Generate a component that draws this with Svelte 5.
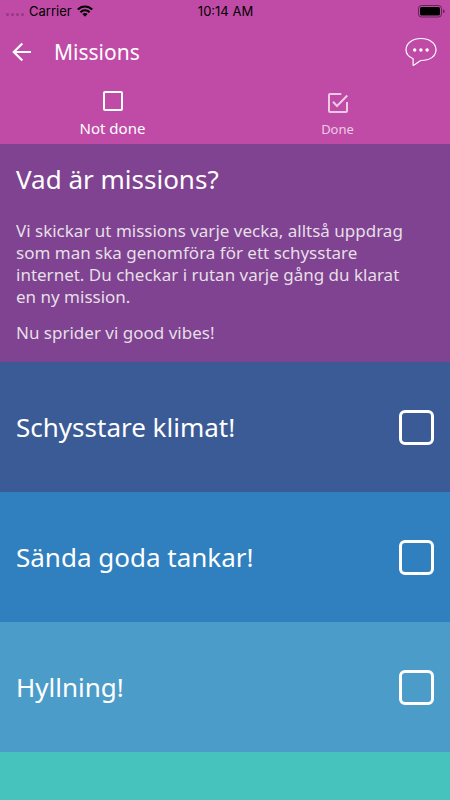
<script>
  let missions = $state([
    { id: 'klimat', title: 'Schysstare klimat!', color: '#3b5b97', done: false },
    { id: 'tankar', title: 'Sända goda tankar!', color: '#307fbe', done: false },
    { id: 'hyllning', title: 'Hyllning!', color: '#4c9cc9', done: false }
  ]);
  let tab = $state('open');
</script>

<div class="screen">
  <header>
    <div class="status">
      <div class="carrier">
        <span class="signal"><i></i><i></i><i></i><i></i></span>
        <span>Carrier</span>
        <svg width="16" height="12" viewBox="0 0 16 12" fill="none" stroke="#000" stroke-width="2.1" aria-hidden="true">
          <path d="M.8 4.5C4.9.4 11.1.4 15.2 4.5" />
          <path d="M3.4 7.2C6 4.6 10 4.6 12.6 7.2" />
          <path d="M8 11.8 5.4 9.1Q8 7 10.6 9.1Z" fill="#000" stroke="none" />
        </svg>
      </div>
      <span>10:14 AM</span>
      <div class="battery">
        <svg width="27" height="13" viewBox="0 0 27 13" aria-hidden="true">
          <rect x=".5" y=".5" width="23" height="11.5" rx="3" fill="none" stroke="#000" stroke-opacity=".5" />
          <rect x="2" y="2" width="20" height="8.5" rx="1.5" />
          <path d="M25 4.3q1.6.5 1.6 2t-1.6 2z" fill-opacity=".5" />
        </svg>
      </div>
    </div>

    <div class="bar">
      <button class="icon" aria-label="Back">
        <svg width="20" height="20" viewBox="0 0 20 20" fill="none" stroke="#fff" stroke-width="2.2">
          <path d="M19 10H2.5M10.3 1.5 1.8 10l8.5 8.5" />
        </svg>
      </button>
      <h1>Missions</h1>
      <button class="icon" aria-label="Messages">
        <svg width="32" height="30" viewBox="0 0 32 30" fill="none" stroke="#fff" stroke-width="1.2">
          <path d="M8.1 28.4V21.7C3.5 19.8 1 16.7 1 12.8 1 6.2 7.6 1.5 16 1.5S31 6.2 31 12.8 24.8 23.5 16 23.5C13.4 24.3 11.2 27.4 8.1 28.4Z" stroke-linejoin="round" />
          <g fill="#fff" stroke="none"><circle cx="9.7" cy="13" r="1.7" /><circle cx="15.9" cy="13" r="1.7" /><circle cx="22.1" cy="13" r="1.7" /></g>
        </svg>
      </button>
    </div>

    <nav>
      <button class="tab" class:active={tab === 'open'} onclick={() => (tab = 'open')}>
        <svg width="20" height="20" viewBox="0 0 20 20" fill="none" stroke="#fff" stroke-width="2">
          <rect x="1" y="1" width="18" height="18" rx="1" />
        </svg>
        <span>Not done</span>
      </button>
      <button class="tab" class:active={tab === 'done'} onclick={() => (tab = 'done')}>
        <svg width="20" height="20" viewBox="0 0 20 20" fill="none" stroke="#fff" stroke-width="2">
          <path d="M13.3 1H2Q1 1 1 2v16q0 1 1 1h16q1 0 1-1V9" />
          <path d="m5 8.7 4 4.3L19.3 2.5" />
        </svg>
        <span>Done</span>
      </button>
    </nav>
  </header>

  <main>
    <section class="intro">
      <h2>Vad är missions?</h2>
      <p>Vi skickar ut missions varje vecka, alltså uppdrag som man ska genomföra för ett schysstare internet. Du checkar i rutan varje gång du klarat en ny mission.</p>
      <p>Nu sprider vi good vibes!</p>
    </section>

    {#each missions as mission (mission.id)}
      <label class="mission" style:background={mission.color}>
        <span>{mission.title}</span>
        <input type="checkbox" bind:checked={mission.done} />
      </label>
    {/each}
  </main>
</div>

<style>
  :global(body) {
    margin: 0;
  }
  .screen {
    min-height: 100vh;
    background: #46c3bd;
    color: #fff;
    font-family: 'Noto Sans', 'Open Sans', sans-serif;
  }
  header {
    background: #c04ba7;
  }
  .status {
    display: grid;
    grid-template-columns: 1fr auto 1fr;
    align-items: center;
    height: 22px;
    padding: 0 5px 0 6px;
    color: #000;
    font: 13px/22px Inter, sans-serif;
  }
  .carrier {
    display: flex;
    align-items: center;
    gap: 5px;
  }
  .signal {
    display: flex;
    gap: 2px;
    padding-top: 7px;
  }
  .signal i {
    width: 3px;
    height: 3px;
    border-radius: 50%;
    background: #943a82;
  }
  .battery {
    display: flex;
    justify-content: flex-end;
  }
  .bar {
    display: flex;
    align-items: center;
    height: 60px;
    padding: 0 13px 0 12px;
  }
  h1 {
    flex: 1;
    margin: 0 0 0 22px;
    font-size: 21px;
    font-weight: 400;
    line-height: 28px;
  }
  button {
    border: 0;
    padding: 0;
    background: none;
    color: inherit;
    font-family: inherit;
    cursor: pointer;
  }
  svg {
    display: block;
  }
  nav {
    display: flex;
    height: 62px;
  }
  .tab {
    flex: 1;
    display: flex;
    flex-direction: column;
    align-items: center;
    justify-content: flex-end;
    gap: 7px;
    padding-bottom: 6px;
    font-size: 13px;
    line-height: 18px;
    opacity: 0.7;
  }
  .tab.active {
    gap: 8px;
    padding-bottom: 7px;
    font-size: 15px;
    opacity: 1;
  }
  .intro {
    padding: 15px 40px 18px 16px;
    background: #7f4391;
  }
  h2 {
    margin: 0 0 21px;
    font-size: 26px;
    font-weight: 400;
    line-height: 40px;
  }
  p {
    margin: 0 0 14px;
    color: #e6dfe6;
    font-size: 17px;
    line-height: 22px;
  }
  p:last-child {
    margin-bottom: 0;
  }
  .mission {
    display: flex;
    align-items: center;
    justify-content: space-between;
    height: 130px;
    padding: 0 16px;
    font-size: 26px;
    line-height: 36px;
    cursor: pointer;
  }
  input {
    appearance: none;
    box-sizing: border-box;
    width: 35px;
    height: 35px;
    margin: 0;
    border: 3px solid #fff;
    border-radius: 6px;
  }
  input:checked {
    background: #fff;
  }
</style>
